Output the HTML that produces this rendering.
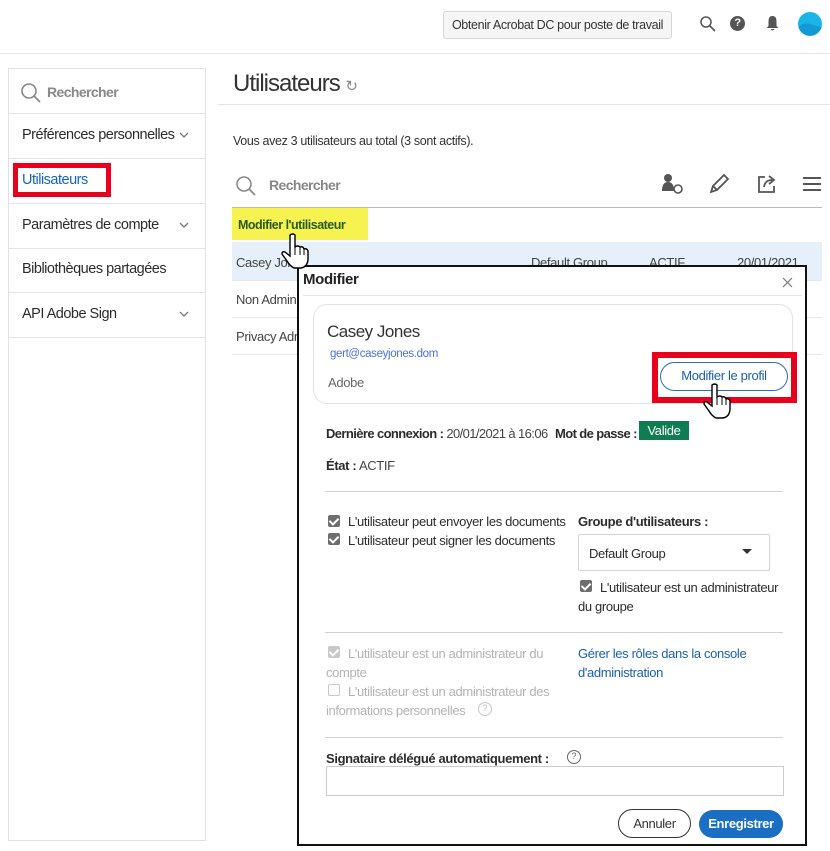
<!DOCTYPE html>
<html><head><meta charset="utf-8"><style>
*{margin:0;padding:0;box-sizing:border-box}
body{width:830px;height:851px;background:#fff;font-family:"Liberation Sans",sans-serif;color:#2c2c2c;position:relative;overflow:hidden;font-size:13px;letter-spacing:-0.35px}
.a{position:absolute;white-space:nowrap}
.hr{position:absolute;height:1px;background:#d0d0d0}
.cb{position:absolute;width:12px;height:12px;background:#6e6e6e;border-radius:2px}
.cb:after{content:"";position:absolute;left:3px;top:1px;width:4px;height:7px;border:solid #fff;border-width:0 2px 2px 0;transform:rotate(45deg)}
.cb.d{background:#c8c8c8}
.g{color:#b3b3b3}
b{font-weight:bold}
.sb{font-size:14.5px;letter-spacing:-0.5px}
</style></head><body>
<!-- top bar -->
<div class="a" style="left:443px;top:11px;width:229px;height:28px;border:1px solid #d6d6d6;border-radius:3px;background:#f6f6f6;font-size:12.5px;line-height:26px;text-align:center;color:#333">Obtenir Acrobat DC pour poste de travail</div>
<svg class="a" style="left:699px;top:15px" width="18" height="18"><circle cx="7" cy="7" r="5" fill="none" stroke="#555" stroke-width="1.5"/><line x1="11" y1="11" x2="16" y2="16" stroke="#555" stroke-width="1.6"/></svg>
<div class="a" style="left:730px;top:16px;width:15px;height:15px;border-radius:50%;background:#555;color:#fff;font-size:11px;font-weight:bold;text-align:center;line-height:15px">?</div>
<svg class="a" style="left:765px;top:15px" width="15" height="17"><path d="M7.5 1 C4 1 3.5 4 3.5 7 L3.5 11 L1.5 13 L13.5 13 L11.5 11 L11.5 7 C11.5 4 11 1 7.5 1Z M5.5 14 Q7.5 17 9.5 14Z" fill="#555"/></svg>
<svg class="a" style="left:798px;top:12px" width="24" height="24"><circle cx="12" cy="12" r="12" fill="#1ab4e8"/><path d="M0.5 15 Q6 10 12 12 Q18 14 23.5 15 A12 12 0 0 1 0.5 15Z" fill="#1399d6"/></svg>
<div class="hr" style="left:0;top:53px;width:830px;background:#e4e4e4"></div>
<!-- sidebar -->
<div class="a" style="left:8px;top:68px;width:198px;height:773px;border:1px solid #e1e1e1"></div>
<svg class="a" style="left:20px;top:82px" width="22" height="22"><circle cx="9" cy="9" r="7" fill="none" stroke="#888" stroke-width="1.6"/><line x1="14" y1="14" x2="20" y2="20" stroke="#888" stroke-width="1.8"/></svg>
<div class="a" style="left:47px;top:84px;font-size:14px;color:#888;font-weight:bold;letter-spacing:-0.6px">Rechercher</div>
<div class="hr" style="left:9px;top:113px;width:196px;background:#e4e4e4"></div>
<div class="a sb" style="left:22px;top:127px">Préférences personnelles</div>
<svg class="a" style="left:179px;top:132px" width="10" height="7"><path d="M1 1L5 5L9 1" fill="none" stroke="#777" stroke-width="1.3"/></svg>
<div class="hr" style="left:9px;top:158px;width:196px;background:#e4e4e4"></div>
<div class="a" style="left:13px;top:163px;width:98px;height:34px;border:5px solid #e8001c"></div>
<div class="a sb" style="left:22px;top:172px;color:#1466b8">Utilisateurs</div>
<div class="hr" style="left:9px;top:203px;width:196px;background:#e4e4e4"></div>
<div class="a sb" style="left:22px;top:217px">Paramètres de compte</div>
<svg class="a" style="left:179px;top:222px" width="10" height="7"><path d="M1 1L5 5L9 1" fill="none" stroke="#777" stroke-width="1.3"/></svg>
<div class="hr" style="left:9px;top:248px;width:196px;background:#e4e4e4"></div>
<div class="a sb" style="left:22px;top:261px">Bibliothèques partagées</div>
<div class="hr" style="left:9px;top:292px;width:196px;background:#e4e4e4"></div>
<div class="a sb" style="left:22px;top:306px">API Adobe Sign</div>
<svg class="a" style="left:179px;top:311px" width="10" height="7"><path d="M1 1L5 5L9 1" fill="none" stroke="#777" stroke-width="1.3"/></svg>
<div class="hr" style="left:9px;top:337px;width:196px;background:#e4e4e4"></div>
<!-- main -->
<div class="a" style="left:233px;top:70px;font-size:24px;color:#333;letter-spacing:-1px">Utilisateurs <span style="font-size:15px;color:#888">↻</span></div>
<div class="hr" style="left:218px;top:104px;width:612px;background:#e4e4e4"></div>
<div class="a" style="left:233px;top:134px;font-size:12.5px;color:#333">Vous avez 3 utilisateurs au total (3 sont actifs).</div>
<svg class="a" style="left:235px;top:175px" width="22" height="22"><circle cx="9" cy="9" r="7" fill="none" stroke="#888" stroke-width="1.6"/><line x1="14" y1="14" x2="20" y2="20" stroke="#888" stroke-width="1.8"/></svg>
<div class="a" style="left:269px;top:177px;font-size:14px;color:#888;font-weight:bold;letter-spacing:-0.6px">Rechercher</div>
<svg class="a" style="left:660px;top:173px" width="26" height="22"><circle cx="8" cy="5" r="4" fill="#555"/><path d="M2 18 Q2 9 8 9 Q14 9 14 18Z" fill="#555"/><circle cx="18" cy="16" r="4" fill="#fff" stroke="#555" stroke-width="1.6"/></svg>
<svg class="a" style="left:708px;top:173px" width="22" height="22"><path d="M3 19 L5 13 L16 2 L20 6 L9 17Z M5 13 L9 17" fill="none" stroke="#555" stroke-width="1.8"/></svg>
<svg class="a" style="left:756px;top:173px" width="22" height="22"><path d="M9 4 L3 4 L3 19 L18 19 L18 13" fill="none" stroke="#555" stroke-width="1.8"/><path d="M8 14 Q9 7 16 7 M13 3 L18 7 L13 11" fill="none" stroke="#555" stroke-width="1.8"/></svg>
<svg class="a" style="left:802px;top:175px" width="20" height="18"><path d="M1 3H19M1 9H19M1 15H19" stroke="#555" stroke-width="2"/></svg>
<div class="hr" style="left:232px;top:207px;width:590px;background:#bbb"></div>
<div class="a" style="left:232px;top:208px;width:136px;height:32px;background:#f6f351"></div>
<div class="a" style="left:238px;top:218px;font-size:12.5px;font-weight:bold;color:#2b5a1e;letter-spacing:-0.5px">Modifier l'utilisateur</div>
<div class="a" style="left:232px;top:242px;width:590px;height:38px;background:#e5f0fa"></div>
<div class="a" style="left:236px;top:255px;color:#444">Casey Jones</div>
<div class="a" style="left:531px;top:255px;color:#444">Default Group</div>
<div class="a" style="left:649px;top:255px;color:#444">ACTIF</div>
<div class="a" style="left:737px;top:255px;color:#444">20/01/2021</div>
<div class="hr" style="left:232px;top:280px;width:590px;background:#e8e8e8"></div>
<div class="a" style="left:236px;top:292px;color:#444">Non Admin</div>
<div class="hr" style="left:232px;top:317px;width:590px;background:#e8e8e8"></div>
<div class="a" style="left:236px;top:329px;color:#444">Privacy Admin</div>
<div class="hr" style="left:232px;top:354px;width:590px;background:#e8e8e8"></div>
<!-- modal -->
<div class="a" style="left:297px;top:265px;width:510px;height:581px;border:2px solid #111;background:#fff"></div>
<div class="a" style="left:303px;top:271px;font-size:15px;font-weight:bold;color:#222">Modifier</div>
<svg class="a" style="left:782px;top:277px" width="11" height="11"><path d="M1 1L10 10M10 1L1 10" stroke="#777" stroke-width="1.2"/></svg>
<div class="hr" style="left:303px;top:295px;width:499px;background:#e6e6e6"></div>
<div class="a" style="left:313px;top:304px;width:480px;height:100px;border:1px solid #e2e2e2;border-radius:14px"></div>
<div class="a" style="left:327px;top:322px;font-size:17px;color:#333;letter-spacing:-0.5px">Casey Jones</div>
<div class="a" style="left:330px;top:348px;font-size:11.5px;color:#4b6fe0">gert@caseyjones.dom</div>
<div class="a" style="left:328px;top:375px;font-size:13px;color:#666">Adobe</div>
<div class="a" style="left:652px;top:352px;width:145px;height:51px;border:6px solid #e8001c"></div>
<div class="a" style="left:660px;top:362px;width:128px;height:29px;border:1.5px solid #2d6fbd;border-radius:15px;text-align:center;line-height:26px;color:#1a5fb0;font-size:13px">Modifier le profil</div>
<div class="a" style="left:326px;top:426px;letter-spacing:-0.6px"><b>Dernière connexion :</b> <span style="color:#444">20/01/2021 à 16:06</span></div>
<div class="a" style="left:555px;top:426px;letter-spacing:-0.6px"><b>Mot de passe :</b></div>
<div class="a" style="left:639px;top:421px;width:50px;height:19px;background:#0f7d53;color:#fff;text-align:center;line-height:20px">Valide</div>
<div class="a" style="left:326px;top:458px"><b>État :</b> <span style="color:#444">ACTIF</span></div>
<div class="hr" style="left:325px;top:491px;width:458px"></div>
<div class="cb" style="left:328px;top:515px"></div>
<div class="a" style="left:348px;top:514px">L'utilisateur peut envoyer les documents</div>
<div class="cb" style="left:328px;top:533px"></div>
<div class="a" style="left:348px;top:533px">L'utilisateur peut signer les documents</div>
<div class="a" style="left:578px;top:514px"><b>Groupe d'utilisateurs :</b></div>
<div class="a" style="left:578px;top:534px;width:192px;height:37px;border:1px solid #d4d4d4;border-radius:2px"></div>
<div class="a" style="left:589px;top:546px">Default Group</div>
<svg class="a" style="left:741px;top:548px" width="12" height="8"><path d="M1 1H11L6 6Z" fill="#333"/></svg>
<div class="cb" style="left:580px;top:580px"></div>
<div class="a" style="left:600px;top:580px">L'utilisateur est un administrateur</div>
<div class="a" style="left:578px;top:599px">du groupe</div>
<div class="hr" style="left:325px;top:632px;width:458px"></div>
<div class="cb d" style="left:328px;top:646px"></div>
<div class="a g" style="left:348px;top:646px">L'utilisateur est un administrateur du</div>
<div class="a g" style="left:326px;top:665px">compte</div>
<div class="a" style="left:328px;top:684px;width:12px;height:12px;border:1.5px solid #c8c8c8;border-radius:2px"></div>
<div class="a g" style="left:348px;top:684px">L'utilisateur est un administrateur des</div>
<div class="a g" style="left:326px;top:703px">informations personnelles</div>
<div class="a" style="left:478px;top:702px;width:14px;height:14px;border:1.5px solid #c8c8c8;border-radius:50%;font-size:9px;text-align:center;line-height:11px;color:#bbb;letter-spacing:0">?</div>
<div class="a" style="left:578px;top:646px;color:#1a5fb0">Gérer les rôles dans la console</div>
<div class="a" style="left:578px;top:665px;color:#1a5fb0">d'administration</div>
<div class="hr" style="left:325px;top:737px;width:458px"></div>
<div class="a" style="left:326px;top:751px"><b>Signataire délégué automatiquement :</b></div>
<div class="a" style="left:567px;top:750px;width:14px;height:14px;border:1.5px solid #666;border-radius:50%;font-size:9px;text-align:center;line-height:11px;color:#666;letter-spacing:0">?</div>
<div class="a" style="left:326px;top:766px;width:458px;height:30px;border:1px solid #ccc"></div>
<div class="a" style="left:618px;top:809px;width:73px;height:29px;border:1.5px solid #333;border-radius:15px;text-align:center;line-height:27px;color:#333">Annuler</div>
<div class="a" style="left:699px;top:810px;width:84px;height:28px;background:#1a6fc4;border-radius:14px;text-align:center;line-height:28px;color:#fff;font-weight:bold">Enregistrer</div>
<!-- cursors -->
<svg class="a" style="left:280px;top:233px" width="32" height="38"><path d="M10 2 Q13 0 15 2 L15 14 Q18 12 20 14 Q23 13 24 16 Q27 15 28 18 L28 27 Q27 34 21 35 L14 35 Q10 33 7 28 L2 21 Q2 18 5 19 L10 23Z" fill="#fff" stroke="#000" stroke-width="1.4"/><path d="M15 14 L15 22 M20 14 L20 22 M24 16 L24 22" stroke="#000" stroke-width="1"/></svg>
<svg class="a" style="left:702px;top:383px" width="32" height="38"><path d="M10 2 Q13 0 15 2 L15 14 Q18 12 20 14 Q23 13 24 16 Q27 15 28 18 L28 27 Q27 34 21 35 L14 35 Q10 33 7 28 L2 21 Q2 18 5 19 L10 23Z" fill="#fff" stroke="#000" stroke-width="1.4"/><path d="M15 14 L15 22 M20 14 L20 22 M24 16 L24 22" stroke="#000" stroke-width="1"/></svg>
</body></html>
